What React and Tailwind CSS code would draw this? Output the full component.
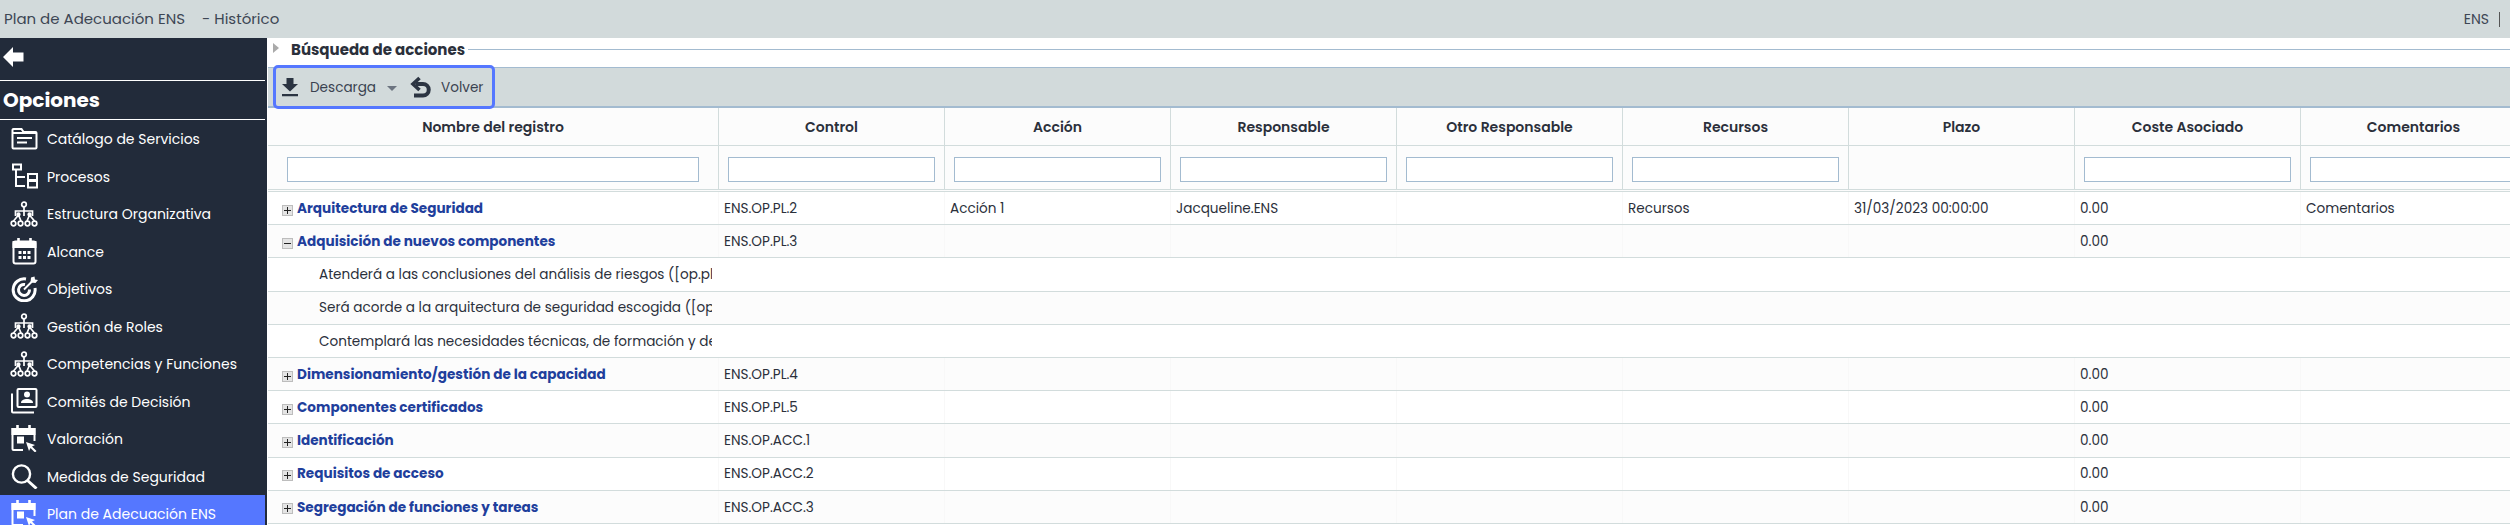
import React from 'react';

const font = { fontFamily: 'Poppins, Inter, "Noto Sans", sans-serif' };

function Org() {
  return (
    <svg width="28" height="26" viewBox="0 0 28 26" fill="none" stroke="currentColor" strokeWidth="1.700">
      <circle cx="14" cy="3.500" r="2.300" />
      <path d="M14 6v4M5.500 15v-5h17v5M14 10v5" />
      <path d="M8.500 14l-5 6M8.500 14l2.500 6M19.500 14l-2.500 6M19.500 14l5 6" />
      <circle cx="8.500" cy="13.500" r="1.300" fill="currentColor" />
      <circle cx="19.500" cy="13.500" r="1.300" fill="currentColor" />
      <circle cx="3.500" cy="22.500" r="2.300" />
      <circle cx="10.500" cy="22.500" r="2.300" />
      <circle cx="17.500" cy="22.500" r="2.300" />
      <circle cx="24.500" cy="22.500" r="2.300" />
    </svg>
  );
}

const icons = {
  catalog: (
    <svg width="27" height="22" viewBox="0 0 27 22" fill="none" stroke="currentColor" strokeWidth="2">
      <path d="M1.500 19.500V2a1 1 0 0 1 1-1h8l2 3h12a1 1 0 0 1 1 1v14.500a1 1 0 0 1-1 1h-22a1 1 0 0 1-1-1z" />
      <path d="M1.500 5h24" />
      <path d="M6 10h15M6 14.500h10" strokeWidth="2.200" />
    </svg>
  ),
  process: (
    <svg width="27" height="26" viewBox="0 0 27 26" fill="none" stroke="currentColor" strokeWidth="2">
      <rect x="2" y="1.500" width="8" height="5" />
      <rect x="17" y="11" width="9" height="6" />
      <rect x="17" y="18" width="9" height="6.500" />
      <path d="M5 7v16h9M5 14h9" />
    </svg>
  ),
  org: <Org />,
  calendar: (
    <svg width="25" height="27" viewBox="0 0 25 27" fill="none" stroke="currentColor" strokeWidth="2">
      <path d="M6.500 0v4M18.500 0v4" strokeWidth="2.600" />
      <rect x="1.500" y="3.500" width="22" height="22" rx="2" />
      <path d="M1.500 4h22v5h-22z" fill="currentColor" />
      <g fill="currentColor" stroke="none">
        <rect x="6.500" y="13" width="3" height="3" />
        <rect x="11" y="13" width="3" height="3" />
        <rect x="15.500" y="13" width="3" height="3" />
        <rect x="6.500" y="18" width="3" height="3" />
        <rect x="11" y="18" width="3" height="3" />
        <rect x="15.500" y="18" width="3" height="3" />
      </g>
    </svg>
  ),
  target: (
    <svg width="27" height="26" viewBox="0 0 27 26" fill="none" stroke="currentColor" strokeWidth="3">
      <path d="M15 3a11 11 0 1 0 9 9" />
      <path d="M14 8.500a5.500 5.500 0 1 0 4.500 5" />
      <path d="M13 13.500L22 4.500" strokeWidth="2" />
      <path d="M20 1.500l-.5 5 5 .5 2.500-3-3-.5-.5-3z" fill="currentColor" stroke="none" />
    </svg>
  ),
  committee: (
    <svg width="28" height="26" viewBox="0 0 28 26" fill="none" stroke="currentColor" strokeWidth="2">
      <path d="M2 5.500v18a1 1 0 0 0 1 1h21" />
      <rect x="7.500" y="1" width="19" height="18" rx="1" />
      <circle cx="17" cy="6.500" r="3" fill="currentColor" stroke="none" />
      <path d="M11 15c0-3 3-4 6-4s6 1 6 4z" fill="currentColor" stroke="none" />
    </svg>
  ),
  rating: (
    <svg width="26" height="27" viewBox="0 0 26 27" fill="none" stroke="currentColor" strokeWidth="2">
      <path d="M6.500 0v4M18.500 0v4" strokeWidth="2.600" />
      <path d="M12 25H2.500a1 1 0 0 1-1-1V4h22v12" />
      <path d="M1.500 4h22v5h-22z" fill="currentColor" />
      <rect x="6" y="11.500" width="7" height="7" fill="currentColor" stroke="none" />
      <path d="M15 17l9 3-3 1.500 4.500 4.500-1.500 1.500-4.500-4.500-1.500 3z" fill="currentColor" stroke="none" />
    </svg>
  ),
  search: (
    <svg width="27" height="25" viewBox="0 0 27 25" fill="none" stroke="currentColor" strokeWidth="2.400">
      <circle cx="10.500" cy="10" r="8.600" />
      <path d="M16.500 16.500L25.500 24.500" strokeWidth="3" />
    </svg>
  ),
};

const menu = [
  { label: 'Catálogo de Servicios', icon: 'catalog' },
  { label: 'Procesos', icon: 'process' },
  { label: 'Estructura Organizativa', icon: 'org' },
  { label: 'Alcance', icon: 'calendar' },
  { label: 'Objetivos', icon: 'target' },
  { label: 'Gestión de Roles', icon: 'org' },
  { label: 'Competencias y Funciones', icon: 'org' },
  { label: 'Comités de Decisión', icon: 'committee' },
  { label: 'Valoración', icon: 'rating' },
  { label: 'Medidas de Seguridad', icon: 'search' },
  { label: 'Plan de Adecuación ENS', icon: 'rating', active: true },
];

const columns = ['Control', 'Acción', 'Responsable', 'Otro Responsable', 'Recursos', 'Plazo', 'Coste Asociado', 'Comentarios'];

const rows = [
  { name: 'Arquitectura de Seguridad', cells: ['ENS.OP.PL.2', 'Acción 1', 'Jacqueline.ENS', '', 'Recursos', '31/03/2023 00:00:00', '0.00', 'Comentarios'] },
  { name: 'Adquisición de nuevos componentes', open: true, cells: ['ENS.OP.PL.3', '', '', '', '', '', '0.00', ''] },
  { child: 'Atenderá a las conclusiones del análisis de riesgos ([op.pl.1])' },
  { child: 'Será acorde a la arquitectura de seguridad escogida ([op.pl.1])' },
  { child: 'Contemplará las necesidades técnicas, de formación y de financiación' },
  { name: 'Dimensionamiento/gestión de la capacidad', cells: ['ENS.OP.PL.4', '', '', '', '', '', '0.00', ''] },
  { name: 'Componentes certificados', cells: ['ENS.OP.PL.5', '', '', '', '', '', '0.00', ''] },
  { name: 'Identificación', cells: ['ENS.OP.ACC.1', '', '', '', '', '', '0.00', ''] },
  { name: 'Requisitos de acceso', cells: ['ENS.OP.ACC.2', '', '', '', '', '', '0.00', ''] },
  { name: 'Segregación de funciones y tareas', cells: ['ENS.OP.ACC.3', '', '', '', '', '', '0.00', ''] },
];

function Toggle({ open }) {
  return (
    <span className="w-[11px] h-[11px] shrink-0 bg-[#e4e4e4] border border-[#bdbdbd] flex items-center justify-center mt-[2px]">
      <svg width="7" height="7" viewBox="0 0 7 7" fill="#222">
        <rect x="0" y="3" width="7" height="1" />
        {!open && <rect x="3" y="0" width="1" height="7" />}
      </svg>
    </span>
  );
}

export default function App() {
  return (
    <div className="w-[2510px] h-[525px] overflow-hidden flex flex-col bg-white text-[#2b303b] text-[13.600px]" style={font}>
      {/* Top bar */}
      <div className="h-[38px] shrink-0 bg-[#d2dadb] flex items-center justify-between pl-[4px] pr-[10px] text-[#3d4654] text-[15px]">
        <div className="flex gap-[17px]">
          <span>Plan de Adecuación ENS</span>
          <span>- Histórico</span>
        </div>
        <div className="flex items-center gap-[10px]">
          <span className="text-[14px]">ENS</span>
          <span className="w-px h-[15px] bg-[#555]"></span>
        </div>
      </div>

      <div className="flex flex-1 min-h-0">
        {/* Sidebar */}
        <aside className="w-[267px] shrink-0 bg-[#222b3a] text-white pr-[2px] overflow-hidden">
          <div className="h-[43px] border-b border-white pl-[3px] pt-[9px]">
            <svg width="21" height="20" viewBox="0 0 21 20" fill="white">
              <path d="M0 10L10 0v5.500h10.500v9H10V20z" />
            </svg>
          </div>
          <div className="h-[39px] border-b border-white pl-[3px] flex items-center text-[20px] font-bold">Opciones</div>
          <div>
            {menu.map((item) => (
              <div key={item.label} className={`h-[37.500px] flex items-center pl-[10px] gap-[9px] text-[14px] ${item.active ? 'bg-[#5577ff]' : ''}`}>
                <span className="w-[28px] h-[28px] shrink-0 flex items-center justify-center">{icons[item.icon]}</span>
                <span className="whitespace-nowrap pt-[2px]">{item.label}</span>
              </div>
            ))}
          </div>
        </aside>

        {/* Main */}
        <main className="flex-1 min-w-0 pl-px overflow-hidden">
          <div className="h-[29px] flex items-start pt-px">
            <span className="ml-[5px] mt-[4px] w-0 h-0 border-y-[5px] border-y-transparent border-l-[6px] border-l-[#aaaaaa]"></span>
            <span className="ml-[12px] font-bold text-[15px] leading-[22px] whitespace-nowrap">Búsqueda de acciones</span>
            <span className="flex-1 h-px bg-[#a3bbd0] ml-[3px] mt-[10px]"></span>
          </div>

          <div className="h-[41px] bg-[#d2dadb] border-t border-[#a3bbd0] border-b-2 border-b-[#a3bbd0] relative">
            <div className="absolute left-[5px] top-[-3px] w-[222px] h-[44px] border-[3px] border-[#5577ff] rounded-[5px] flex items-center pl-[6px] text-[#3a4250]">
              <svg width="16" height="20" viewBox="0 0 16 20" fill="#2b3442">
                <path d="M4.500 1h7v6H16l-8 7.500L0 7h4.500zM0 17h16v2.200H0z" />
              </svg>
              <span className="ml-[12px] pt-[2px]">Descarga</span>
              <span className="ml-[11px] mt-[2px] w-0 h-0 border-x-[5px] border-x-transparent border-t-[5px] border-t-[#6c7480]"></span>
              <svg className="ml-[12px]" width="22" height="22" viewBox="0 0 22 22" fill="none" stroke="#2b3442" strokeWidth="4">
                <path d="M7 8h7a5.500 5.500 0 0 1 0 11.500H5" />
                <path d="M10.500 2L4 8l6.500 6" strokeWidth="3.600" />
              </svg>
              <span className="ml-[10px] pt-[2px]">Volver</span>
            </div>
          </div>

          {/* Table header */}
          <div className="flex h-[38px] bg-[#fcfcfc] border-b border-[#d2dcdc] font-semibold text-[14px]">
            <div className="w-[451px] shrink-0 flex items-center justify-center border-r border-[#d2dcdc] pt-[2px]">Nombre del registro</div>
            {columns.map((col) => (
              <div key={col} className="w-[226px] shrink-0 flex items-center justify-center border-r border-[#d2dcdc] pt-[2px]">{col}</div>
            ))}
          </div>

          {/* Filters */}
          <div className="flex h-[46px] bg-[#fcfcfc] border-b-[3px] border-double border-b-[#d2dcdc]">
            <div className="w-[451px] shrink-0 border-r border-[#d2dcdc] px-[19px] pt-[11px]">
              <input className="block w-full h-[25px] bg-white border border-[#a3bbd0] outline-none" />
            </div>
            {columns.map((col) => (
              <div key={col} className="w-[226px] shrink-0 border-r border-[#d2dcdc] px-[9px] pt-[11px]">
                {col !== 'Plazo' && <input className="block w-full h-[25px] bg-white border border-[#a3bbd0] outline-none" />}
              </div>
            ))}
          </div>

          {/* Rows */}
          {rows.map((row, i) => (
            <div key={i} className={`flex h-[33.200px] border-b border-[#d2dcdc] ${i % 2 ? 'bg-[#fcfcfc]' : 'bg-white'}`}>
              {row.child ? (
                <div className="w-[393px] shrink-0 ml-[51px] pt-[2px] flex items-center overflow-hidden whitespace-nowrap">{row.child}</div>
              ) : (
                <>
                  <div className="w-[451px] shrink-0 pl-[14px] pt-[2px] flex items-center gap-[4px] border-r border-[#f8f8f8] whitespace-nowrap">
                    <Toggle open={row.open} />
                    <span className="font-bold text-[#1f3f9c]">{row.name}</span>
                  </div>
                  {row.cells.map((cell, j) => (
                    <div key={j} className="w-[226px] shrink-0 pl-[5px] pt-[2px] flex items-center border-r border-[#f8f8f8] whitespace-nowrap">{cell}</div>
                  ))}
                </>
              )}
            </div>
          ))}
        </main>
      </div>
    </div>
  );
}
